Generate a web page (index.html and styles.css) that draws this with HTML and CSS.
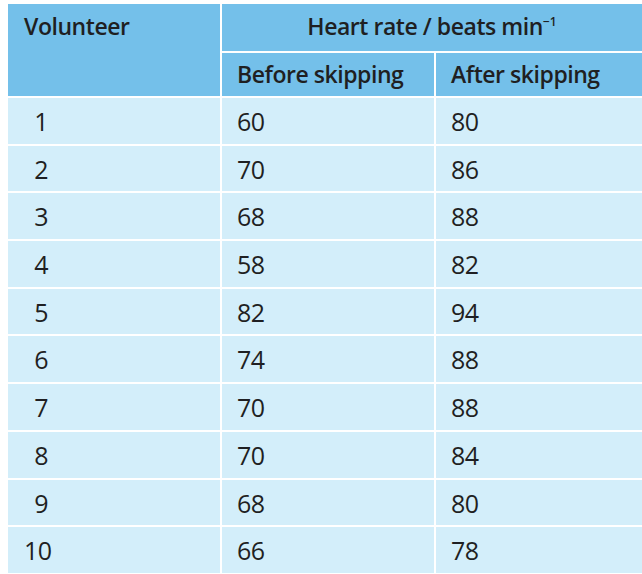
FILE: index.html
```html
<!DOCTYPE html>
<html>
<head>
<meta charset="utf-8">
<link rel="stylesheet" href="styles.css">
</head>
<body>
<div class="table">
  <div class="cell head vol">Volunteer</div>
  <div class="cell head hr">Heart rate / beats min<span class="sup">−1</span></div>
  <div class="cell head sub">Before skipping</div>
  <div class="cell head sub">After skipping</div>

  <div class="cell body first"><span class="num">1</span></div><div class="cell body">60</div><div class="cell body">80</div>
  <div class="cell body first"><span class="num">2</span></div><div class="cell body">70</div><div class="cell body">86</div>
  <div class="cell body first"><span class="num">3</span></div><div class="cell body">68</div><div class="cell body">88</div>
  <div class="cell body first"><span class="num">4</span></div><div class="cell body">58</div><div class="cell body">82</div>
  <div class="cell body first"><span class="num">5</span></div><div class="cell body">82</div><div class="cell body">94</div>
  <div class="cell body first"><span class="num">6</span></div><div class="cell body">74</div><div class="cell body">88</div>
  <div class="cell body first"><span class="num">7</span></div><div class="cell body">70</div><div class="cell body">88</div>
  <div class="cell body first"><span class="num">8</span></div><div class="cell body">70</div><div class="cell body">84</div>
  <div class="cell body first"><span class="num">9</span></div><div class="cell body">68</div><div class="cell body">80</div>
  <div class="cell body first"><span class="num">10</span></div><div class="cell body">66</div><div class="cell body">78</div>
</div>
</body>
</html>
```
FILE: styles.css
```css
html, body {
  margin: 0;
  padding: 0;
  background: #ffffff;
}
body {
  padding: 4px 0 0 8px;
  font-family: "Open Sans", "Noto Sans", sans-serif;
  color: #1f1f22;
}
.table {
  display: grid;
  grid-template-columns: 212px 212px 206px;
  grid-template-rows: 47px 43px repeat(10, 45.7px);
  gap: 2px;
  background: #ffffff;
  width: 634px;
}
.cell {
  padding-left: 15px;
  box-sizing: border-box;
}
.head {
  background: #74c0ea;
  font-weight: 600;
  font-size: 23px;
  line-height: 24px;
  letter-spacing: -0.45px;
}
.vol {
  grid-row: 1 / span 2;
  padding-left: 16px;
  padding-top: 10px;
}
.hr {
  grid-column: 2 / span 2;
  text-align: center;
  padding-left: 0;
  padding-top: 10px;
}
.sup {
  font-size: 12px;
  vertical-align: 9px;
  line-height: 0;
  letter-spacing: 0;
}
.sub {
  padding-top: 9px;
}
.body {
  background: #d3eefa;
  font-weight: 400;
  font-size: 25px;
  line-height: 26px;
  letter-spacing: -0.5px;
  padding-top: 10px;
}
.first {
  padding-left: 16px;
}
.num {
  display: inline-block;
  width: 24px;
  text-align: right;
}
```
